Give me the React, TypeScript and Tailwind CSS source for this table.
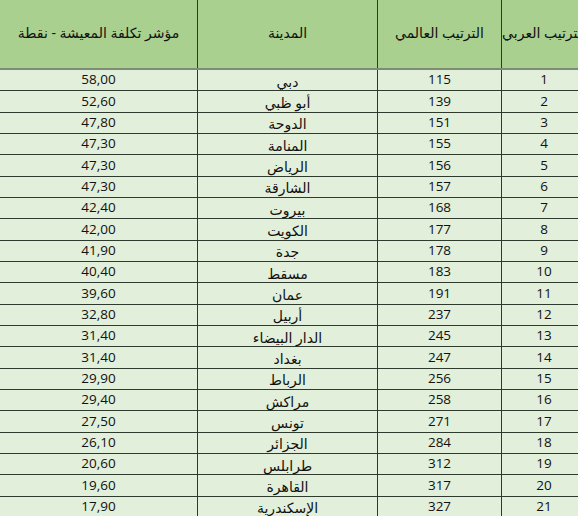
const rows: [number, number, string, string][] = [
  [1, 115, 'دبي', '58,00'],
  [2, 139, 'أبو ظبي', '52,60'],
  [3, 151, 'الدوحة', '47,80'],
  [4, 155, 'المنامة', '47,30'],
  [5, 156, 'الرياض', '47,30'],
  [6, 157, 'الشارقة', '47,30'],
  [7, 168, 'بيروت', '42,40'],
  [8, 177, 'الكويت', '42,00'],
  [9, 178, 'جدة', '41,90'],
  [10, 183, 'مسقط', '40,40'],
  [11, 191, 'عمان', '39,60'],
  [12, 237, 'أربيل', '32,80'],
  [13, 245, 'الدار البيضاء', '31,40'],
  [14, 247, 'بغداد', '31,40'],
  [15, 256, 'الرباط', '29,90'],
  [16, 258, 'مراكش', '29,40'],
  [17, 271, 'تونس', '27,50'],
  [18, 284, 'الجزائر', '26,10'],
  [19, 312, 'طرابلس', '20,60'],
  [20, 317, 'القاهرة', '19,60'],
  [21, 327, 'الإسكندرية', '17,90'],
];

const cols = 'grid grid-cols-[198px_180px_124px_84px]';

export default function App() {
  return (
    <div className="w-[578px] h-[516px] overflow-hidden bg-[#e2efda] text-[#111] font-['Open_Sans','DejaVu_Sans',sans-serif] text-[13.5px]">
      <div className="w-[586px]">
        {/* header */}
        <div className={`${cols} h-[70px] bg-[#a9d08e] border-b-2 border-[#7d8c74] text-[14px]`}>
          <div dir="rtl" className="flex items-center justify-center pb-1 border-r border-[#2f3a2f]">
            مؤشر تكلفة المعيشة - نقطة
          </div>
          <div dir="rtl" className="flex items-center justify-center pb-1 border-r border-[#2f3a2f]">
            المدينة
          </div>
          <div dir="rtl" className="flex items-center justify-center pb-1 border-r border-[#2f3a2f]">
            الترتيب العالمي
          </div>
          <div dir="rtl" className="flex items-center justify-center pb-1 whitespace-nowrap">
            الترتيب العربي
          </div>
        </div>

        {/* rows */}
        {rows.map(([arab, world, city, index]) => (
          <div key={arab} className={`${cols} h-[21.33px] border-b border-[#2f3a2f]`}>
            <div className="flex items-center justify-center border-r border-[#2f3a2f] leading-none">{index}</div>
            <div dir="rtl" className="flex items-center justify-center pt-[3px] border-r border-[#2f3a2f] leading-none text-[14px]">
              {city}
            </div>
            <div className="flex items-center justify-center border-r border-[#2f3a2f] leading-none">{world}</div>
            <div className="flex items-center justify-center leading-none">{arab}</div>
          </div>
        ))}
      </div>
    </div>
  );
}
